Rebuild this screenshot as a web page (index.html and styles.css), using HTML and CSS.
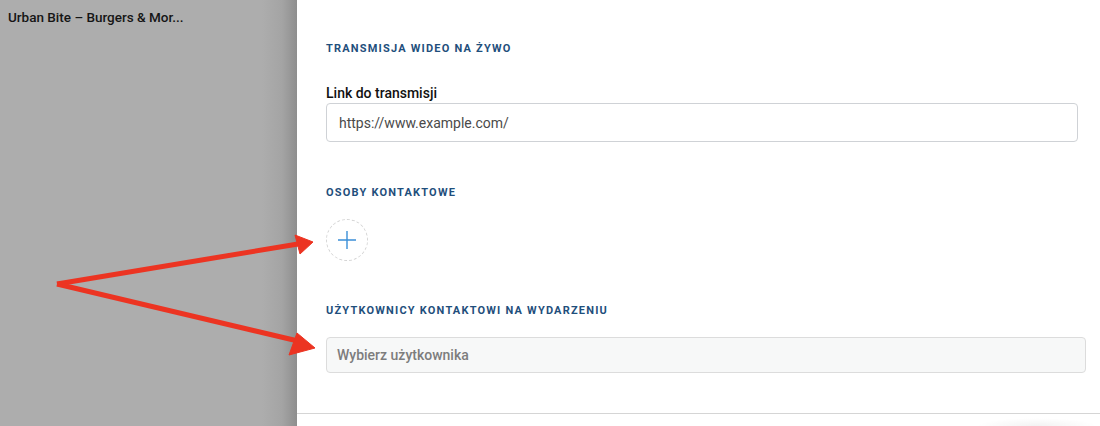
FILE: index.html
```html
<!DOCTYPE html>
<html lang="pl">
<head>
<meta charset="utf-8">
<title>Urban Bite</title>
<link rel="stylesheet" href="styles.css">
</head>
<body>
<div class="page">
  <aside class="backdrop">
    <div class="backdrop-title">Urban Bite – Burgers &amp; Mor...</div>
  </aside>
  <main class="panel">
    <section class="section">
      <h2 class="section-title">Transmisja wideo na żywo</h2>
      <label class="field-label">Link do transmisji</label>
      <div class="text-input">https://www.example.com/</div>
    </section>
    <section class="section">
      <h2 class="section-title">Osoby kontaktowe</h2>
      <button class="add-btn" type="button" aria-label="Dodaj">
        <svg width="20" height="20" viewBox="0 0 20 20"><path d="M10 1v18M1 10h18" stroke="#3b8fd8" stroke-width="1.4" fill="none"/></svg>
      </button>
    </section>
    <section class="section">
      <h2 class="section-title">Użytkownicy kontaktowi na wydarzeniu</h2>
      <div class="select-input">Wybierz użytkownika</div>
    </section>
    <div class="divider"></div>
    <div class="footer-space"></div>
  </main>
  <svg class="arrows" width="1100" height="426" viewBox="0 0 1100 426">
    <g fill="#ec3422" stroke="#ec3422" stroke-linejoin="round">
      <path d="M57 284 L298 244" stroke-width="5" fill="none"/>
      <path d="M57 284 L298 341" stroke-width="5" fill="none"/>
      <path d="M295 235 L313 242 L300 254 Z" stroke-width="1"/>
      <path d="M297 333 L315 348 L289 355 Z" stroke-width="1"/>
    </g>
  </svg>
</div>
</body>
</html>
```
FILE: styles.css
```css
* { box-sizing: border-box; }
html, body { margin: 0; padding: 0; }
body {
  font-family: Roboto, "Liberation Sans", Arial, sans-serif;
  width: 1100px;
  height: 426px;
  overflow: hidden;
  background: #ffffff;
}
.page {
  position: relative;
  display: flex;
  width: 1100px;
  height: 426px;
}
.backdrop {
  width: 297px;
  flex: none;
  background: linear-gradient(to right, #adadad 0, #adadad 262px, #a4a4a4 282px, #8e8e8e 297px);
  padding: 9px 0 0 8px;
}
.backdrop-title {
  font-size: 13.5px;
  font-weight: 500;
  color: #151515;
  line-height: 16px;
}
.panel {
  flex: 1;
  background: #fff;
  padding: 41px 22px 0 29px;
  display: flex;
  flex-direction: column;
}
.section { display: flex; flex-direction: column; align-items: flex-start; }
.section + .section { margin-top: 43px; }
.section-title {
  margin: 0;
  font-size: 11px;
  line-height: 16px;
  font-weight: 700;
  letter-spacing: 1.2px;
  text-transform: uppercase;
  color: #1f4f7c;
}
.field-label {
  margin-top: 27px;
  font-size: 14px;
  line-height: 18px;
  font-weight: 500;
  color: #111;
}
.text-input {
  margin-top: 1px;
  width: 100%;
  height: 39px;
  border: 1px solid #cfd2d6;
  border-radius: 4px;
  padding: 0 12px;
  display: flex;
  align-items: center;
  font-size: 14px;
  color: #4a4a4a;
}
.add-btn {
  margin-top: 18px;
  width: 42px;
  height: 42px;
  border-radius: 50%;
  border: 1px dashed #d4d4d4;
  background: #fff;
  padding: 0;
  display: flex;
  align-items: center;
  justify-content: center;
}
.select-input {
  margin-top: 18px;
  width: calc(100% + 8px);
  height: 36px;
  border: 1px solid #dcdcdc;
  border-radius: 4px;
  background: #f7f8f8;
  padding: 0 10px;
  display: flex;
  align-items: center;
  font-size: 14px;
  font-weight: 500;
  color: #7d7d7d;
}
.section:last-of-type { margin-top: 42px; }
.divider {
  margin: 40px -22px 0 -29px;
  height: 1px;
  background: #d5d5d5;
}
.footer-space {
  flex: 1;
  margin: 0 -22px 0 -29px;
  background: radial-gradient(ellipse 60px 8px at 740px 12px, rgba(0,0,0,0.05), rgba(0,0,0,0) 100%), #fff;
}
.arrows {
  position: absolute;
  left: 0;
  top: 0;
  pointer-events: none;
}
```
